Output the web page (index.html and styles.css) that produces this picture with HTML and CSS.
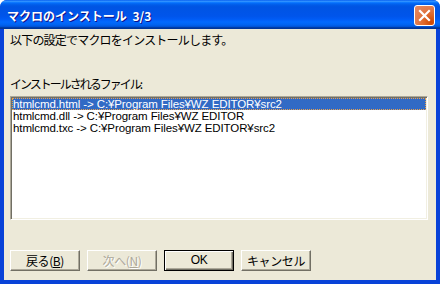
FILE: index.html
```html
<!DOCTYPE html>
<html lang="ja">
<head>
<meta charset="utf-8">
<link rel="stylesheet" href="styles.css">
</head>
<body>
<div class="window">
  <div class="titlebar">
    <span class="title">マクロのインストール 3/3</span>
    <div class="close">
      <svg width="13" height="13" viewBox="0 0 13 13"><path d="M2 2 L11 11 M11 2 L2 11" stroke="#fff" stroke-width="2.2" stroke-linecap="square"/></svg>
    </div>
  </div>
  <div class="client">
    <p class="intro">以下の設定でマクロをインストールします。</p>
    <p class="label">インストールされるファイル:</p>
    <div class="listbox">
      <div class="item selected">htmlcmd.html -&gt; C:¥Program Files¥WZ EDITOR¥src2</div>
      <div class="item">htmlcmd.dll -&gt; C:¥Program Files¥WZ EDITOR</div>
      <div class="item">htmlcmd.txc -&gt; C:¥Program Files¥WZ EDITOR¥src2</div>
    </div>
    <div class="buttons">
      <button class="btn">戻る(<u>B</u>)</button>
      <button class="btn disabled">次へ(<u>N</u>)</button>
      <button class="btn default">OK</button>
      <button class="btn">キャンセル</button>
    </div>
  </div>
</div>
</body>
</html>
```
FILE: styles.css
```css
html, body {
  margin: 0;
  padding: 0;
  background: #ffffff;
}
body {
  font-family: "Liberation Sans", "Noto Sans CJK JP", sans-serif;
  font-size: 12px;
}
.window {
  width: 440px;
  height: 284px;
  box-sizing: border-box;
  display: flex;
  flex-direction: column;
  background: #0842d8;
  border-radius: 7px 7px 0 0;
  overflow: hidden;
}
.titlebar {
  height: 29px;
  flex: none;
  display: flex;
  align-items: center;
  justify-content: space-between;
  padding: 0 5px 0 7px;
  background: linear-gradient(to bottom, #0058ee 0%, #3593ff 4%, #288eff 6%, #127dff 8%, #036ffc 10%, #0262ee 14%, #0057e5 20%, #0054e3 24%, #0055eb 56%, #005bf5 66%, #026afe 76%, #0062ef 86%, #0052d6 92%, #0040ab 94%, #003092 100%);
}
.title {
  color: #fff;
  font-family: "Noto Sans CJK JP", sans-serif;
  font-weight: bold;
  font-size: 12px;
  letter-spacing: 0;
  word-spacing: 3px;
  text-shadow: 1px 1px #0f1089;
  padding-top: 1px;
}
.close {
  width: 21px;
  height: 21px;
  box-sizing: border-box;
  border: 1px solid #fff;
  border-radius: 3px;
  background: radial-gradient(circle at 85% 85%, #cc4600 0%, #dc6527 30%, #e27a4a 60%, #e48a66 100%);
  display: flex;
  align-items: center;
  justify-content: center;
  margin-top: 2px;
}
.client {
  flex: 1;
  margin: 0 4px 4px 4px;
  background: #ece9d8;
  padding: 0 6px;
  display: flex;
  flex-direction: column;
  color: #000;
}
.intro, .label {
  margin: 0;
  font-family: "Noto Sans CJK JP", sans-serif;
  font-size: 12px;
  line-height: 14px;
  letter-spacing: -0.8px;
}
.intro {
  margin-top: 4px;
}
.label {
  margin-top: 30px;
  letter-spacing: -2px;
}
.listbox {
  margin-top: 5px;
  width: 418px;
  height: 124px;
  box-sizing: border-box;
  background: #fff;
  border-style: solid;
  border-width: 1px;
  border-color: #aca899 #fff #fff #aca899;
  box-shadow: inset 1px 1px #716f64, inset -1px -1px #f1efe2;
  padding: 1px;
}
.item {
  height: 12px;
  line-height: 12px;
  padding-left: 1px;
  white-space: nowrap;
  font-size: 11.5px;
  letter-spacing: -0.1px;
}
.item.selected {
  background: #316ac5;
  color: #fff;
  outline: 1px dotted #e8a04c;
  outline-offset: -1px;
}
.buttons {
  margin-top: 30px;
  display: flex;
  gap: 7px;
}
.btn {
  width: 70px;
  height: 21px;
  box-sizing: border-box;
  padding: 0;
  margin: 0;
  background: #ece9d8;
  border-style: solid;
  border-width: 1px;
  border-color: #fff #716f64 #716f64 #fff;
  box-shadow: inset -1px -1px #aca899;
  font-family: "Noto Sans CJK JP", sans-serif;
  font-size: 12px;
  letter-spacing: -0.4px;
  color: #000;
  line-height: 17px;
}
.btn u {
  text-decoration: underline;
}
.btn.disabled {
  color: #aca899;
  text-shadow: 1px 1px #fff;
}
.btn.default {
  border: 1px solid #000;
  box-shadow: inset 1px 1px #fff, inset -1px -1px #716f64, inset -2px -2px #aca899;
  font-family: "Liberation Sans", sans-serif;
}
```
